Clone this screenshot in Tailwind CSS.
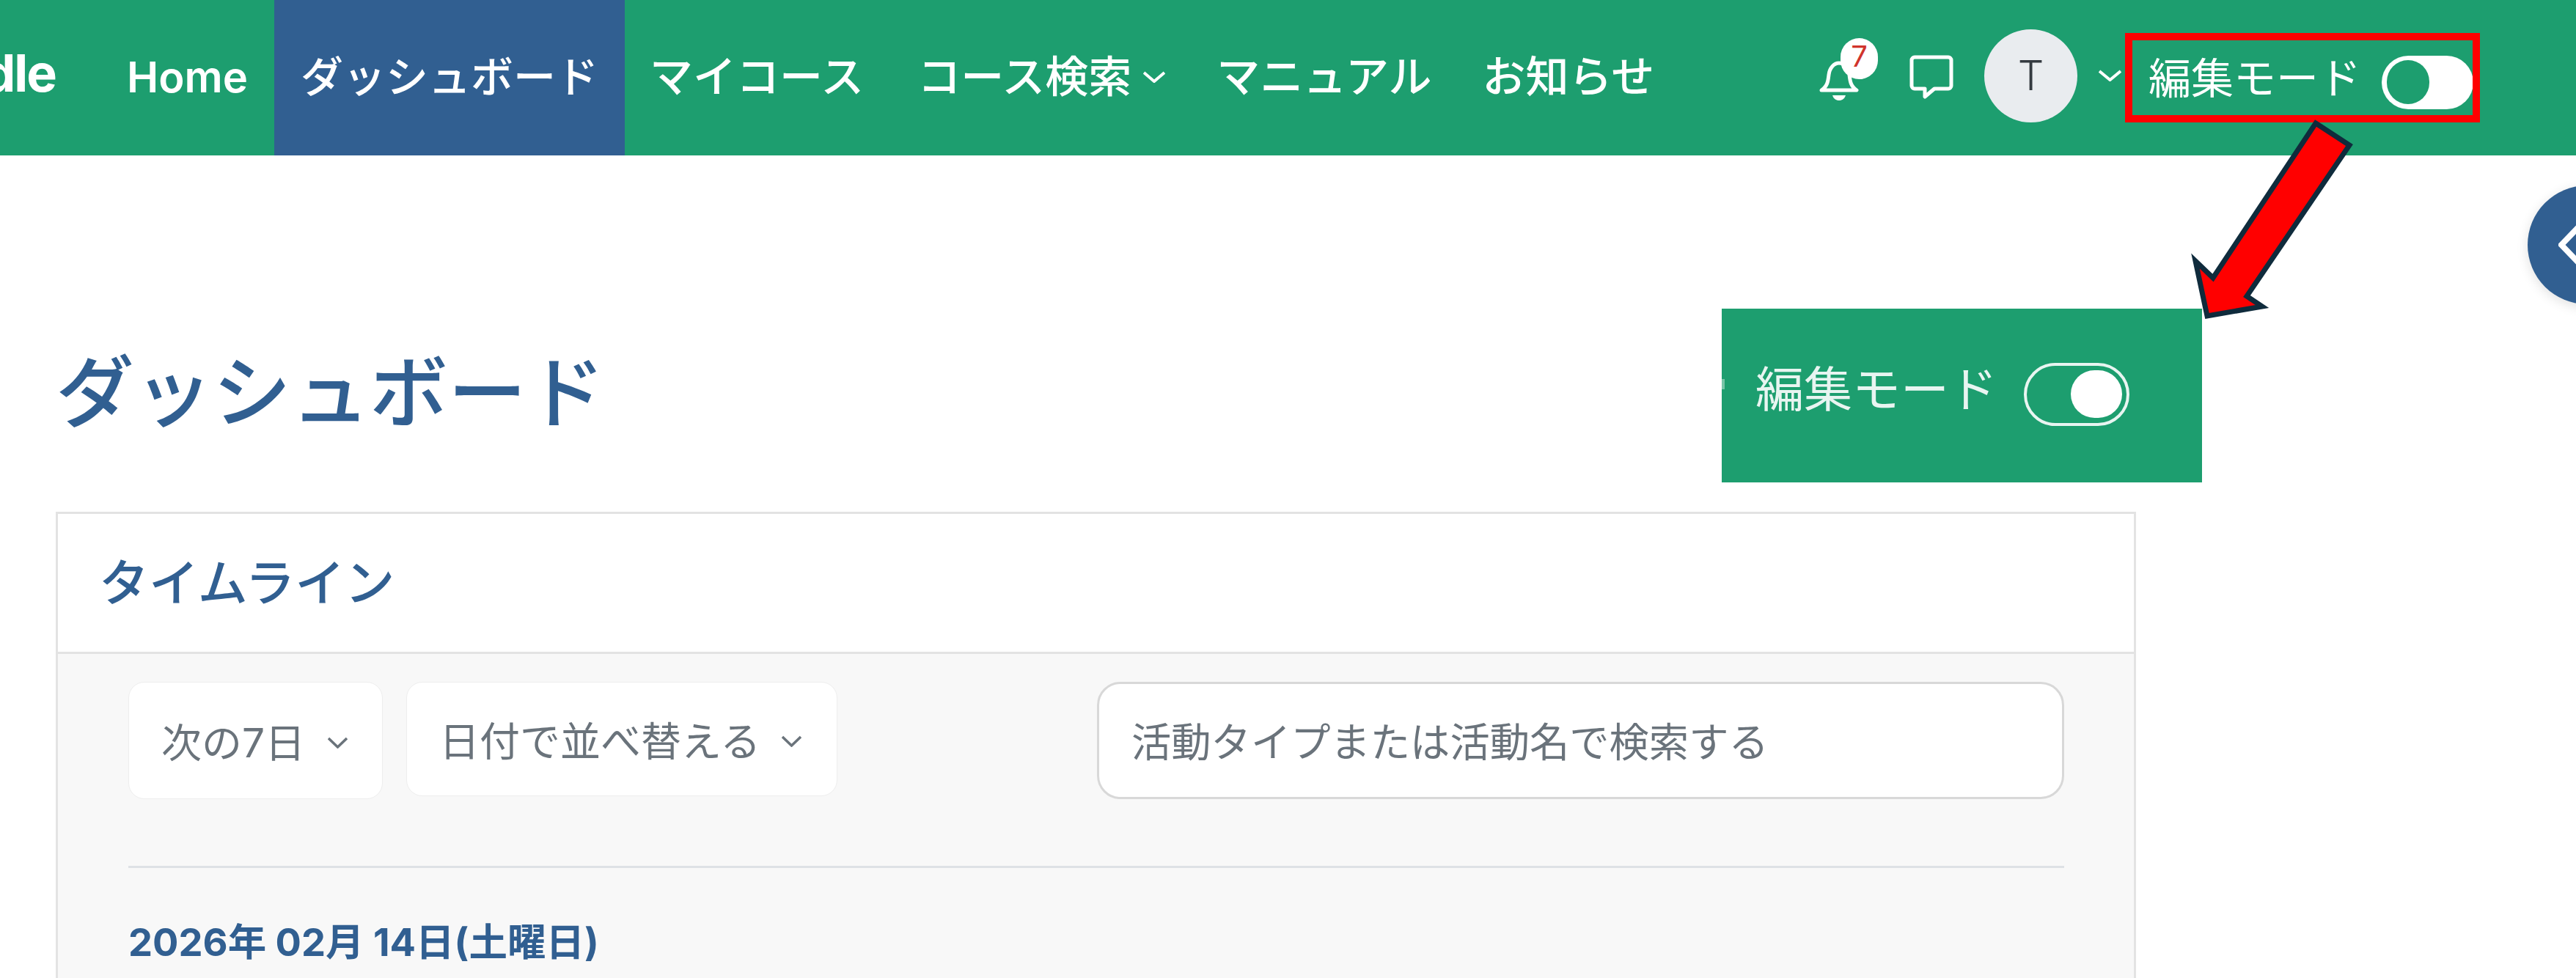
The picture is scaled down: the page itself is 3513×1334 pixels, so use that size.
<!DOCTYPE html>
<html lang="ja">
  <head>
    <meta charset="UTF-8" />
    <title>ダッシュボード</title>
    <script src="https://cdn.jsdelivr.net/npm/@tailwindcss/browser@4"></script>
  </head>
  <body class="bg-white font-['Inter','Noto_Sans_CJK_JP',sans-serif]">
    <div class="relative w-[3513px] h-[1334px] overflow-hidden bg-white">
      <!-- Top nav -->
      <header class="flex items-center h-[212px] bg-[#1d9e6f] text-white text-[59px] font-medium whitespace-nowrap">
        <div class="flex justify-end w-[76px] overflow-hidden mb-[14px] text-[70px] font-bold tracking-[-2px]">moodle</div>
        <nav class="flex h-full ml-[59px]">
          <a class="flex items-center pl-[38px] pr-[36px] pb-[2px] text-[58px] font-semibold">Home</a>
          <a class="flex items-center px-[36px] pb-[2px] text-[58px] bg-[#315f91]">ダッシュボード</a>
          <a class="flex items-center pl-[34px] pr-[39px] pb-[2px]">マイコース</a>
          <a class="flex items-center gap-[16px] pl-[34px] pr-[36px] pb-[2px]">
            コース検索
            <svg class="w-[30px] h-[16px]" viewBox="0 0 30 16" fill="none" stroke="white" stroke-width="4"><path d="M1 2l14 12L29 2" /></svg>
          </a>
          <a class="flex items-center pl-[34px] pr-[30px] pb-[2px]">マニュアル</a>
          <a class="flex items-center px-[39px] pb-[2px]">お知らせ</a>
        </nav>
        <div class="flex items-center ml-auto mr-[140px] pb-[6px] text-[58px]">
          <div class="relative w-[81px] h-[84px] mb-[18px]">
            <svg class="absolute left-0 top-[31px] w-[54px] h-[54px]" viewBox="0 0 54 54" fill="none" stroke="white" stroke-width="5" stroke-linejoin="round">
              <path d="M3 40c8-5 9-12 10-21 1-9 7-16 14-16s13 7 14 16c1 9 2 16 10 21z" />
              <path d="M18 47h18c-2 6-6 7-9 7s-7-1-9-7z" fill="white" stroke="none" />
            </svg>
            <div class="absolute left-[29px] top-0 flex justify-center w-[51px] h-[56px] rounded-full bg-white text-[#d0342c] text-[40px] font-normal leading-[50px]">7</div>
          </div>
          <svg class="w-[60px] h-[60px] ml-[42px] mt-[4px]" viewBox="0 0 60 60" fill="none" stroke="white" stroke-width="5" stroke-linejoin="round">
            <path d="M7 3h46a4 4 0 0 1 4 4v35a4 4 0 0 1-4 4H34L21 57v-11H7a4 4 0 0 1-4-4V7a4 4 0 0 1 4-4z" />
          </svg>
          <div class="flex items-center justify-center w-[127px] h-[127px] ml-[42px] rounded-full bg-[#e9ecef] text-[#343a40] text-[56px] font-light">T</div>
          <svg class="w-[31px] h-[16px] ml-[29px]" viewBox="0 0 31 16" fill="none" stroke="white" stroke-width="4"><path d="M1 2l14.500 12L30 2" /></svg>
          <span class="ml-[37px] mt-[8px] font-normal">編集モード</span>
          <div class="flex items-center w-[125px] h-[73px] ml-[28px] mt-[18px] pl-[7px] rounded-full bg-white">
            <div class="w-[58px] h-[60px] rounded-full bg-[#1d9e6f]"></div>
          </div>
        </div>
      </header>

      <!-- Page content -->
      <main class="w-[2837px] ml-[76px] pt-[270px]">
        <h1 class="text-[107px] leading-none font-medium text-[#315f91]">ダッシュボード</h1>
        <section class="mt-[109px] border-[3px] border-[#e3e3e3] bg-[#f8f8f8] h-[700px]">
          <div class="flex items-center h-[191px] px-[56px] border-b-[3px] border-[#e3e3e3] bg-white">
            <h2 class="text-[68px] font-medium text-[#315f91]">タイムライン</h2>
          </div>
          <div class="pt-[38px] pl-[96px] pr-[95px]">
            <div class="flex items-start text-[55px] text-[#6a737b]">
              <div class="flex items-center justify-between w-[347px] h-[160px] pt-[6px] pl-[44px] pr-[47px] rounded-[22px] border border-[#eeeeee] bg-white">
                次の7日
                <svg class="w-[27px] h-[16px]" viewBox="0 0 27 16" fill="none" stroke="#6a737b" stroke-width="3.500"><path d="M1 2l12.500 12L26 2" /></svg>
              </div>
              <div class="flex items-center justify-between w-[588px] h-[156px] ml-[32px] pt-[6px] pl-[44px] pr-[48px] rounded-[22px] border border-[#eeeeee] bg-white">
                日付で並べ替える
                <svg class="w-[27px] h-[16px]" viewBox="0 0 27 16" fill="none" stroke="#6a737b" stroke-width="3.500"><path d="M1 2l12.500 12L26 2" /></svg>
              </div>
              <div class="flex items-center w-[1319px] h-[160px] ml-auto pt-[6px] pl-[44px] rounded-[32px] border-[3px] border-[#d8d8d8] bg-white text-[54.300px]">活動タイプまたは活動名で検索する</div>
            </div>
            <div class="mt-[91px] h-[3px] bg-[#dee2e6]"></div>
            <p class="mt-[66px] text-[52.500px] leading-[70px] font-bold text-[#315f91]">2026年 02月 14日(土曜日)</p>
          </div>
        </section>
      </main>

      <!-- Drawer toggle, cut off by the right edge -->
      <div class="absolute left-[3447px] top-[253px] flex items-center w-[162px] h-[162px] pl-[42px] rounded-full bg-[#315f91] shadow-[0_4px_16px_rgba(0,0,0,0.12)]">
        <svg class="w-[30px] h-[56px]" viewBox="0 0 30 56" fill="none" stroke="white" stroke-width="8"><path d="M28 3L4 28l24 25" /></svg>
      </div>

      <!-- Callout: enlarged copy of the switch -->
      <div class="absolute left-[2348px] top-[421px] flex items-center w-[655px] h-[237px] pb-[4px] pl-[46px] bg-[#1d9e6f] text-white/90 text-[66px] whitespace-nowrap">
        <div class="absolute left-0 top-[96px] w-[4px] h-[14px] bg-white/40"></div>
        <span class="mb-[12px]">編集モード</span>
        <div class="flex items-center justify-end w-[144px] h-[86px] ml-[36px] pr-[6px] rounded-full border-[4px] border-white/90">
          <div class="w-[70px] h-[65px] rounded-full bg-white"></div>
        </div>
      </div>

      <!-- Red highlight round the switch in the nav -->
      <div class="absolute left-[2898px] top-[45px] w-[484px] h-[122px] border-[10px] border-[#ff0000]"></div>

      <!-- Arrow -->
      <svg class="absolute left-[2980px] top-[155px] w-[240px] h-[290px]" viewBox="2980 155 240 290" fill="#ff0000" stroke="#0f2b3c" stroke-width="7" stroke-miterlimit="10">
        <path d="M3158 168L3204 198L3064 404L3085 418L3010 431L2994 356L3018 379z" />
      </svg>
    </div>
  </body>
</html>
